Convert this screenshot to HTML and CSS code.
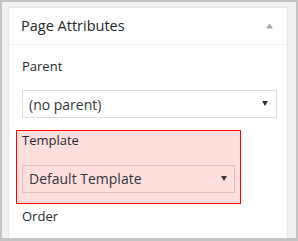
FILE: index.html
```html
<!DOCTYPE html>
<html lang="en">
<head>
    <meta charset="UTF-8">
    <meta name="viewport" content="width=device-width, initial-scale=1.0">
    <title>Page Attributes</title>
    <link rel="stylesheet" href="styles.css">
</head>
<body>

    <div class="frame">
        <div class="postbox">
            <div class="hndle">
                <span>Page Attributes</span>
                <!-- Zuklapp-Pfeil -->
                <svg class="toggle-indicator" width="7" height="6" viewBox="0 0 7 6">
                    <polygon points="3.5,0.5 7,5.5 0,5.5" fill="#a0a5aa"/>
                </svg>
            </div>

            <div class="inside">
                <p class="attr-label">Parent</p>
                <div class="select-wrap">
                    <select class="attr-select">
                        <option>(no parent)</option>
                    </select>
                    <svg class="select-arrow" width="6" height="5" viewBox="0 0 6 5">
                        <polygon points="0,0 6,0 3,5" fill="#32373c"/>
                    </svg>
                </div>

                <!-- markierter Bereich -->
                <div class="highlight">
                    <p class="attr-label">Template</p>
                    <div class="select-wrap">
                        <select class="attr-select">
                            <option>Default Template</option>
                        </select>
                        <svg class="select-arrow" width="6" height="5" viewBox="0 0 6 5">
                            <polygon points="0,0 6,0 3,5" fill="#32373c"/>
                        </svg>
                    </div>
                </div>

                <p class="attr-label order">Order</p>
            </div>
        </div>
    </div>

</body>
</html>
```

FILE: styles.css
```css
body {
    margin: 0;
    font-family: "Open Sans", Arial, sans-serif;
    color: #23282d;
    background: #c4c4c4;
}

/* äußerer Rahmen */
.frame {
    height: 241px;
    box-sizing: border-box;
    border: 2px solid #c4c4c4;
    border-bottom-width: 3px;
    background-color: #f1f1f1;
    padding: 5px 8px 0 6px;
    overflow: hidden;
}

.postbox {
    height: 100%;
    background-color: #fff;
    border: 1px solid #e5e5e5;
    border-bottom: none;
    box-sizing: border-box;
}

.hndle {
    display: flex;
    justify-content: space-between;
    align-items: center;
    padding: 8px 14px 8px 12px;
    font-size: 14.5px;
    line-height: 19.6px;
    border-bottom: 1px solid #eee;
}

.toggle-indicator {
    display: block;
}

.inside {
    padding: 0 10px 0 13px;
}

.attr-label {
    margin: 12px 0 14px;
    font-size: 13px;
    line-height: 1.5;
    color: #23282d;
}

.select-wrap {
    position: relative; /* für den Pfeil */
}

.attr-select {
    display: block;
    width: 100%;
    height: 28px;
    margin: 0;
    padding: 0 20px 0 6px;
    border: 1px solid rgba(0, 0, 0, 0.133);
    border-radius: 0;
    background: transparent;
    color: #32373c;
    font-family: "Open Sans", Arial, sans-serif;
    font-size: 14px;
    -webkit-appearance: none;
    appearance: none;
    box-sizing: border-box;
}

.select-arrow {
    position: absolute;
    right: 9px;
    top: 11px;
}

.highlight {
    width: 225px;
    margin: 12px 0 0 -6px;
    padding: 0 5px 10px;
    border: 1px solid #ff0000;
    background-color: rgba(255, 0, 0, 0.13);
    box-sizing: border-box;
}

.highlight .attr-label {
    margin-top: 0;
}

.highlight .select-arrow {
    right: 8px;
}

.order {
    margin-top: 3px;
}
```
